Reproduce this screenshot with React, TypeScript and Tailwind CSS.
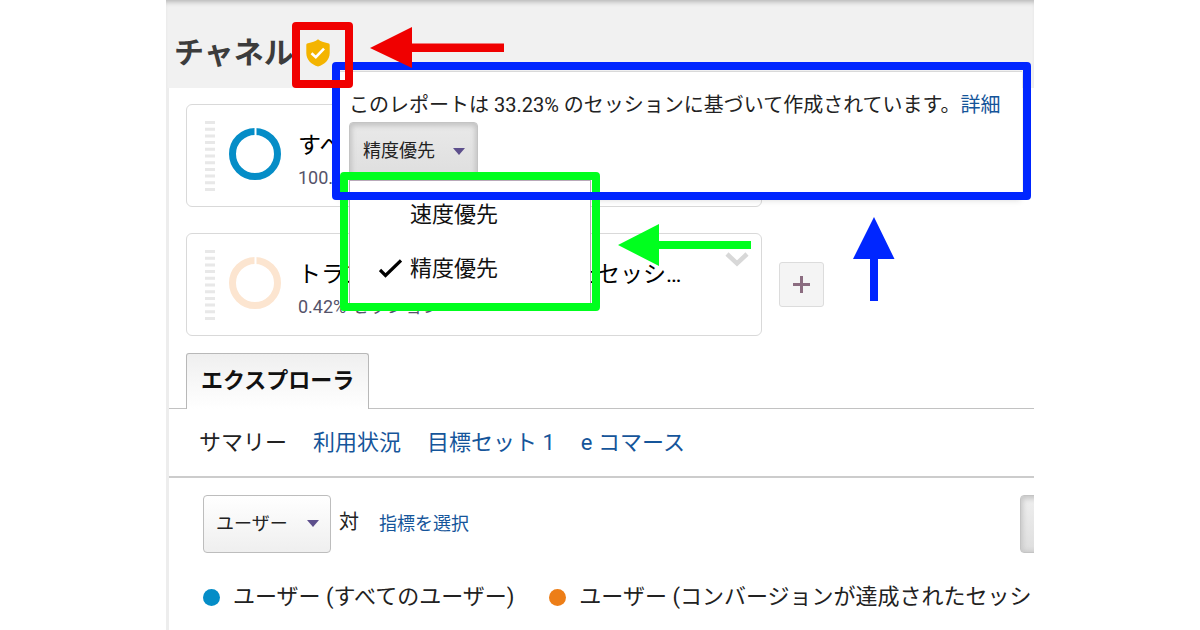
import { useState } from 'react';

const segments = [
  { name: 'すべてのユーザー', share: '100.00% ユーザー', color: '#058dc7' },
  { name: 'トランザクションが発生したセッション', share: '0.42% セッション', color: '#fce5d0' },
];

const subTabs = ['サマリー', '利用状況', '目標セット 1', 'e コマース'];
const samplingModes = ['速度優先', '精度優先'];

const legend = [
  { label: 'ユーザー (すべてのユーザー)', dot: 'bg-[#058dc7]' },
  { label: 'ユーザー (コンバージョンが達成されたセッション)', dot: 'bg-[#ed7e17]' },
];

function ShieldIcon() {
  return (
    <svg width="24" height="28" viewBox="0 0 24 28" aria-hidden="true">
      <path d="M12 0.3C9.500 2.500 6 3.600 2 4.200C0.8 4.400 0.3 5 0.3 6V14C0.3 21 5.500 25.500 12 27.500C18.500 25.500 23.700 21 23.700 14V6C23.700 5 23.200 4.400 22 4.200C18 3.600 14.500 2.500 12 0.3Z" fill="#f4b400" />
      <path d="M5.500 14.200L9.800 18.200L18 9.600" fill="none" stroke="#fff" strokeWidth="2.6" />
    </svg>
  );
}

function Caret() {
  return (
    <svg width="12" height="7" viewBox="0 0 12 7" aria-hidden="true">
      <path d="M0 0H12L6 7Z" fill="#5d4f8c" />
    </svg>
  );
}

function SegmentCard({ segment, open }: { segment: (typeof segments)[number]; open?: boolean }) {
  return (
    <div className="relative flex h-[103px] min-w-0 max-w-[576px] flex-1 items-center rounded-md border border-[#d9d9d9] bg-white pr-[72px] pl-[18px]">
      <svg className="mr-[14px] shrink-0" width="10" height="70" aria-hidden="true">
        <path d="M5 0V70" stroke="#e8e8e8" strokeWidth="10" strokeDasharray="3 3.7" />
      </svg>
      <svg className="mr-[17px] mb-[3px] shrink-0" width="52" height="52" viewBox="0 0 52 52" aria-hidden="true">
        <circle cx="26" cy="26" r="22.5" fill="none" stroke={segment.color} strokeWidth="7" />
        <path d="M26.5 0V8" stroke="#fff" strokeWidth="2" />
      </svg>
      <div className="min-w-0 flex-1 pt-3">
        <div className="truncate text-[23px] leading-8 text-black">{segment.name}</div>
        <div className="text-lg leading-8 text-[#55536a]">{segment.share}</div>
      </div>
      {open && (
        <svg className="absolute top-[18px] right-3" width="24" height="15" viewBox="0 0 24 15" aria-hidden="true">
          <path d="M2 2L12 11.5L22 2" fill="none" stroke="#d8d8d8" strokeWidth="4.5" />
        </svg>
      )}
    </div>
  );
}

function SamplingPopup() {
  const [mode, setMode] = useState('精度優先');

  return (
    <div className="absolute top-[71px] right-3 left-[172px] h-[127px] border-t border-[#d9d9d9] bg-white pl-[11px] shadow-md">
      <p className="pt-[18px] text-xl leading-[30px] whitespace-nowrap text-[#222]">
        このレポートは 33.23% のセッションに基づいて作成されています。
        <a href="#" className="text-[#15559a]">詳細</a>
      </p>
      <button
        type="button"
        aria-haspopup="menu"
        aria-expanded="true"
        className="mt-[2px] flex h-[58px] w-[129px] items-center justify-between rounded-[4px] border border-[#c4c4c4] bg-linear-to-b from-[#e9e9e9] to-[#dedede] pr-3 pl-[13px] text-lg text-[#222] shadow-[inset_0_1px_5px_2px_#c4c4c4]"
      >
        {mode}
        <Caret />
      </button>
      <div role="menu" className="absolute top-[108px] left-[11px] w-[242px] border border-[#b9a9b9] bg-white pt-[6px] pb-2">
        {samplingModes.map((item) => (
          <button
            key={item}
            type="button"
            role="menuitemradio"
            aria-checked={item === mode}
            onClick={() => setMode(item)}
            className="flex h-[54px] w-full items-center text-[22px] text-[#111]"
          >
            <span className="flex w-[60px] justify-end pr-2">
              {item === mode && (
                <svg width="23" height="19" viewBox="0 0 23 19" aria-hidden="true">
                  <path d="M1 11L6.5 16.5L22 1.5" fill="none" stroke="#000" strokeWidth="3.2" />
                </svg>
              )}
            </span>
            {item}
          </button>
        ))}
      </div>
    </div>
  );
}

function Annotations() {
  return (
    <svg className="pointer-events-none absolute top-0 left-0" width="868" height="630" aria-hidden="true">
      <g fill="none" strokeWidth="8" strokeLinejoin="round">
        <rect x="178" y="176" width="252" height="131" stroke="#00ff1e" />
        <rect x="170" y="66" width="691" height="130" stroke="#0026ff" />
        <rect x="130" y="26" width="53" height="58" stroke="#f00000" />
      </g>
      <path d="M204 48L246 27V43.500H338V52H246V68Z" fill="#f00000" />
      <path d="M452 245L493 224V241H585V249H493V266Z" fill="#00ff1e" />
      <path d="M708 217L728.500 259H712V301H704V259H687Z" fill="#0026ff" />
    </svg>
  );
}

function App() {
  return (
    <div className="min-h-screen bg-white font-['Roboto','Noto_Sans_CJK_JP',sans-serif]">
      <div className="relative mx-auto flex min-h-screen max-w-[868px] flex-col overflow-hidden">
        <header className="flex h-[88px] items-center gap-3 bg-[#f1f1f1] pt-[18px] pl-2 shadow-[inset_0_5px_5px_-3px_#b5b5b5]">
          <h1 className="text-[30px] leading-10 font-bold text-[#3c3c3c]">チャネル</h1>
          <ShieldIcon />
        </header>

        <main className="flex-1 border-l-[3px] border-[#ededed]">
          <section className="flex flex-col gap-[26px] pt-4 pl-[17px]">
            <div className="flex">
              <SegmentCard segment={segments[0]} />
            </div>
            <div className="flex items-center gap-[17px]">
              <SegmentCard segment={segments[1]} open />
              <button
                type="button"
                aria-label="セグメントを追加"
                className="flex size-[45px] items-center justify-center rounded-[3px] border border-[#dcdcdc] bg-[#f4f4f4]"
              >
                <svg width="17" height="17" viewBox="0 0 17 17" aria-hidden="true">
                  <path d="M8.500 0V17M0 8.500H17" stroke="#8b6c80" strokeWidth="3" />
                </svg>
              </button>
            </div>
          </section>

          {/* Explorer tab */}
          <div className="mt-[17px] flex border-b border-[#c2c2c2] pl-[17px]">
            <button
              type="button"
              className="-mb-px h-14 rounded-t-[3px] border border-b-0 border-[#b8b8b8] bg-linear-to-b from-[#efefef] to-white px-[14px] pb-[2px] text-[22px] font-bold text-[#111]"
            >
              エクスプローラ
            </button>
          </div>

          <nav className="flex h-[69px] items-center gap-[26px] border-b-2 border-[#cccccc] pl-[30px] text-[22px] whitespace-nowrap">
            {subTabs.map((tab, i) => (
              <a key={tab} href="#" className={i === 0 ? 'text-[#222]' : 'text-[#15559a]'}>
                {tab}
              </a>
            ))}
          </nav>

          <div className="flex items-center pt-[17px] pl-[34px]">
            <div className="relative">
              <select
                aria-label="指標"
                className="h-[58px] w-[128px] appearance-none rounded-[4px] border border-[#bdbdbd] bg-linear-to-b from-white to-[#efefef] pl-3 text-lg text-[#222]"
              >
                <option>ユーザー</option>
              </select>
              <span className="pointer-events-none absolute top-[25px] right-3">
                <Caret />
              </span>
            </div>
            <span className="ml-2 pb-1 text-xl text-[#222]">対</span>
            <a href="#" className="ml-5 text-lg text-[#15559a]">指標を選択</a>
            <button
              type="button"
              aria-label="時間単位"
              className="-mr-4 ml-auto h-[58px] w-[30px] rounded-[4px] border border-[#c4c4c4] bg-linear-to-b from-[#efefef] to-[#dedede] shadow-[inset_0_1px_5px_2px_#c8c8c8]"
            />
          </div>

          <ul className="flex gap-[35px] pt-7 pl-[34px] text-[22px] leading-8 whitespace-nowrap text-[#222]">
            {legend.map((item) => (
              <li key={item.label} className="flex shrink-0 items-center gap-[13px]">
                <span className={`size-[17px] rounded-full ${item.dot}`} />
                {item.label}
              </li>
            ))}
          </ul>
        </main>

        <SamplingPopup />
        <Annotations />
      </div>
    </div>
  );
}

export default App;
